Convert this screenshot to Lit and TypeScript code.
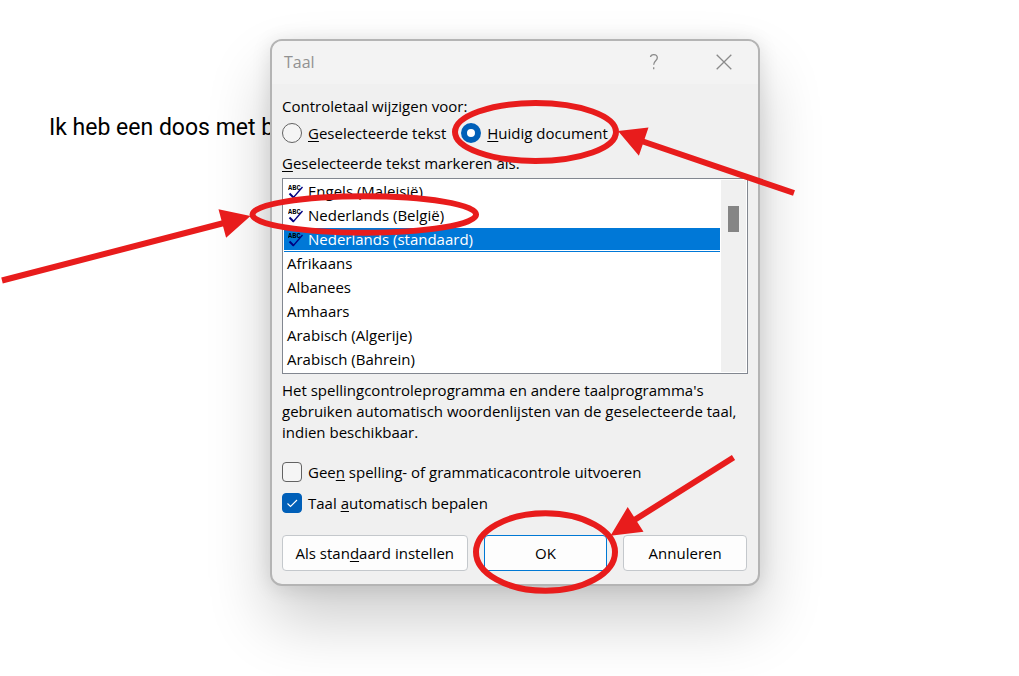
import { LitElement, html, css, svg } from "lit";
import { customElement, state } from "lit/decorators.js";

interface Language {
  name: string;
  proofing: boolean;
}

const LANGUAGES: Language[] = [
  { name: "Engels (Maleisië)", proofing: true },
  { name: "Nederlands (België)", proofing: true },
  { name: "Nederlands (standaard)", proofing: true },
  { name: "Afrikaans", proofing: false },
  { name: "Albanees", proofing: false },
  { name: "Amhaars", proofing: false },
  { name: "Arabisch (Algerije)", proofing: false },
  { name: "Arabisch (Bahrein)", proofing: false },
];

/** Hand-drawn style markers that point at the controls to use. */
@customElement("callout-marks")
export class CalloutMarks extends LitElement {
  static styles = css`
    :host {
      position: absolute;
      left: 0;
      top: 0;
      pointer-events: none;
    }
    .marks {
      display: block;
      overflow: visible;
      fill: none;
      stroke: #e81c1c;
      stroke-width: 6;
    }
    .head {
      fill: #e81c1c;
      stroke: none;
    }
  `;

  render() {
    return html`<svg class="marks" width="1" height="1" aria-hidden="true">
      ${svg`<g transform="translate(-272 -41)">
        <ellipse cx="535.5" cy="132" rx="80.5" ry="29" />
        <ellipse cx="364.3" cy="214.5" rx="111.8" ry="18.2" />
        <ellipse cx="545.5" cy="552" rx="69.5" ry="38.8" />
        <path d="M794 193L640 140.5M2 280.500L224 223M733.500 457.500L632 521.500" />
        <path class="head" d="M618 131l30.500-3.500-9.600 28.300zM250.500 216l-32-6.800 7.600 28.600zM610.500 535.700l17.200-28.700 15.800 24.700z" />
      </g>`}
    </svg>`;
  }
}

@customElement("language-dialog")
export class LanguageDialog extends LitElement {
  @state() private selected = "Nederlands (standaard)";

  static styles = css`
    :host {
      display: block;
      font-family: "Open Sans", "Noto Sans", sans-serif;
      font-size: 15px;
      line-height: 20px;
      color: #000;
    }
    .dialog {
      position: relative;
      border: 2px solid #b4b4b4;
      border-radius: 12px;
      background: #f0f0f0;
      box-shadow: 0 34px 64px rgba(0, 0, 0, 0.2), 0 2px 20px rgba(0, 0, 0, 0.11);
    }
    .titlebar {
      display: flex;
      align-items: center;
      height: 43px;
      padding: 0 19px 2px 12px;
      box-sizing: border-box;
      background: #f3f3f3;
      border-radius: 10px 10px 0 0;
      color: #919191;
    }
    .title {
      flex: 1;
      margin: 0;
      font-size: 16px;
      font-weight: 400;
    }
    .tool {
      display: flex;
      justify-content: center;
      width: 30px;
      margin-left: 40px;
      padding: 0;
      border: 0;
      background: none;
      color: inherit;
      font: inherit;
    }
    .glyph {
      display: block;
      fill: none;
      stroke: #8a8a8a;
      stroke-width: 1.3;
    }
    .content {
      padding: 12px 10px;
    }
    .group {
      margin: 0 0 10px;
      padding: 0;
      border: 0;
    }
    .legend {
      padding: 0;
      margin-bottom: 7px;
    }
    .radios {
      display: flex;
      gap: 15px;
    }
    .choice {
      display: flex;
      align-items: center;
      gap: 6px;
    }
    .mark {
      appearance: none;
      flex: none;
      width: 20px;
      height: 20px;
      margin: 0;
      border: 1px solid #626262;
      background: #f5f5f5;
    }
    .radio {
      border-radius: 50%;
    }
    .radio:checked {
      border: 6px solid #005fb8;
      background: #fff;
    }
    .check {
      border-radius: 4px;
    }
    .check:checked {
      border-color: #005fb8;
      background: #005fb8
        url("data:image/svg+xml,%3Csvg xmlns='http://www.w3.org/2000/svg' width='18' height='18'%3E%3Cpath d='M4.500 9.500l3 3 6.500-6.500' fill='none' stroke='white' stroke-width='1.100'/%3E%3C/svg%3E");
    }
    .list-label {
      display: block;
      margin-bottom: 5px;
    }
    .listframe {
      display: flex;
      padding: 1px;
      border: 1px solid #828790;
      background: #fff;
    }
    .list {
      flex: 1;
      min-width: 0;
      height: 192px;
      padding: 0;
      border: 0;
      outline: 0;
      border-radius: 0;
      overflow: hidden;
      background: #fff;
      font: inherit;
      color: #000;
    }
    .option {
      --tick: url("data:image/svg+xml,%3Csvg xmlns='http://www.w3.org/2000/svg' width='16' height='18'%3E%3Ctext x='0' y='6' font-family='Liberation Mono' font-weight='bold' font-size='7'%3EABC%3C/text%3E%3Cpath d='M1.500 9.500l4 4' fill='none' stroke='%23000080' stroke-width='2'/%3E%3Cpath d='M5 14l9.500-11' fill='none' stroke='%23000080' stroke-width='1.300'/%3E%3C/svg%3E");
      height: 24px;
      min-height: 24px;
      box-sizing: border-box;
      padding: 1px 3px 0;
      line-height: 24px;
      color: #000;
    }
    .proofing {
      padding-left: 24px;
      background: var(--tick) 4px 4px no-repeat;
    }
    .option:checked {
      color: #fff;
      -webkit-text-fill-color: #fff;
      background:
        var(--tick) 4px 4px no-repeat,
        linear-gradient(#0078d7 22px, #fff 22px, #fff 23px, #0078d7 23px);
    }
    .scroll {
      width: 25px;
      margin-left: 1px;
      padding-top: 26px;
      box-sizing: border-box;
      background: #f0f0f0;
    }
    .thumb {
      width: 11px;
      height: 26px;
      margin: 0 auto;
      background: #858585;
    }
    .note {
      margin: 6px 0 19px;
      line-height: 21px;
    }
    .checks {
      display: grid;
      gap: 11px;
      margin-bottom: 22px;
    }
    .actions {
      display: grid;
      grid-template-columns: 3fr 2fr 2fr;
      gap: 16px;
      margin: 0 1px 1px 0;
    }
    .button {
      height: 36px;
      padding: 0;
      border: 1px solid #c4c8cc;
      border-radius: 4px;
      background: #fdfdfd;
      color: #000;
      font: inherit;
    }
    .default {
      border-color: #0078d4;
    }
    u {
      text-underline-offset: 2px;
    }
  `;

  private pick(e: Event) {
    this.selected = (e.target as HTMLSelectElement).value;
  }

  render() {
    return html`
      <section class="dialog" role="dialog" aria-labelledby="title">
        <header class="titlebar">
          <h1 class="title" id="title">Taal</h1>
          <button class="tool" aria-label="Help">
            <svg class="glyph" width="10" height="18" viewBox="0 0 10 18">
              <path d="M1.500 4C1.700 2.300 3 1.600 4.800 1.600C7 1.600 8.300 2.800 8.300 4.700C8.300 7.800 4.700 7.700 4.700 11.700M4.700 14.200v2" />
            </svg>
          </button>
          <button class="tool" aria-label="Sluiten">
            <svg class="glyph" width="16" height="16" viewBox="0 0 16 16">
              <path d="M.700.700l14.600 14.600M15.300.700L.700 15.300" />
            </svg>
          </button>
        </header>
        <div class="content">
          <fieldset class="group">
            <legend class="legend">Controletaal wijzigen voor:</legend>
            <div class="radios">
              <label class="choice"><input class="mark radio" type="radio" name="scope" /><span><u>G</u>eselecteerde tekst</span></label>
              <label class="choice"><input class="mark radio" type="radio" name="scope" checked /><span><u>H</u>uidig document</span></label>
            </div>
          </fieldset>
          <label class="list-label" for="languages"><u>G</u>eselecteerde tekst markeren als:</label>
          <div class="listframe">
            <select class="list" id="languages" size="8" @change=${this.pick}>
              ${LANGUAGES.map(
                (l) => html`<option class="option ${l.proofing ? "proofing" : ""}" ?selected=${l.name === this.selected}>${l.name}</option>`
              )}
            </select>
            <div class="scroll"><div class="thumb"></div></div>
          </div>
          <p class="note">
            Het spellingcontroleprogramma en andere taalprogramma's gebruiken automatisch woordenlijsten van de geselecteerde taal, indien beschikbaar.
          </p>
          <div class="checks">
            <label class="choice"><input class="mark check" type="checkbox" /><span>Gee<u>n</u> spelling- of grammaticacontrole uitvoeren</span></label>
            <label class="choice"><input class="mark check" type="checkbox" checked /><span>Taal <u>a</u>utomatisch bepalen</span></label>
          </div>
          <div class="actions">
            <button class="button">Als stan<u>d</u>aard instellen</button>
            <button class="button default">OK</button>
            <button class="button">Annuleren</button>
          </div>
        </div>
        <callout-marks></callout-marks>
      </section>
    `;
  }
}

@customElement("app-root")
export class AppRoot extends LitElement {
  static styles = css`
    :host {
      display: block;
      position: relative;
      min-height: 100vh;
      overflow: hidden;
      background: #fff;
    }
    .document {
      padding: 113px 49px;
      font-family: Roboto, "Open Sans", sans-serif;
      font-size: 23px;
      line-height: 30px;
      color: #000;
    }
    .line {
      margin: 0;
    }
    .window {
      position: absolute;
      left: 270px;
      top: 39px;
      width: 490px;
    }
  `;

  render() {
    return html`
      <main class="document"><p class="line">Ik heb een doos met b</p></main>
      <language-dialog class="window"></language-dialog>
    `;
  }
}
